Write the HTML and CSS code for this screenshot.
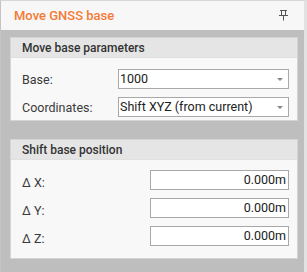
FILE: index.html
```html
<!DOCTYPE html>
<html lang="en">
<head>
  <meta charset="UTF-8" />
  <title>Move GNSS base</title>
  <link rel="stylesheet" href="styles.css">
</head>
<body>
  <div class="janela">
    <div class="janela-topo">
      <span class="titulo">Move GNSS base</span>
      <svg class="pino" width="9" height="11" viewBox="0 0 9 11">
        <path d="M1 0.5h7M2.5 0.5v5M6.5 0.5v5M0 5.5h9M4.5 5.5v5" stroke="#555" stroke-width="1" fill="none" />
      </svg>
    </div>
    <div class="janela-corpo">
      <div class="painel">
        <div class="painel-topo">Move base parameters</div>
        <div class="painel-corpo">
          <div class="linha">
            <label>Base:</label>
            <div class="select">1000<span class="seta"></span></div>
          </div>
          <div class="linha">
            <label>Coordinates:</label>
            <div class="select">Shift XYZ (from current)<span class="seta"></span></div>
          </div>
        </div>
      </div>

      <div class="painel painel-shift">
        <div class="painel-topo">Shift base position</div>
        <div class="painel-corpo">
          <div class="linha">
            <label class="delta">Δ X:</label>
            <div class="numero">0.000m</div>
          </div>
          <div class="linha">
            <label class="delta">Δ Y:</label>
            <div class="numero">0.000m</div>
          </div>
          <div class="linha">
            <label class="delta">Δ Z:</label>
            <div class="numero">0.000m</div>
          </div>
        </div>
      </div>
    </div>
  </div>
</body>
</html>
```

FILE: styles.css
```css
* {
  margin: 0;
  padding: 0;
  box-sizing: border-box;
}
body {
  font-family: Roboto, 'Liberation Sans', sans-serif;
  background: #bebebe;
  color: #333;
  width: 307px;
  height: 272px;
  overflow: hidden;
}
.janela {
  height: 272px;
  border-top: 1px solid #d6d6d6;
  border-left: 1px solid #c4c4c4;
  border-right: 3px solid #e2e2e2;
  display: flex;
  flex-direction: column;
}
.janela-topo {
  height: 29px;
  background: #f7f7f7;
  display: flex;
  align-items: center;
  justify-content: space-between;
  padding: 0 16px 0 13px;
}
.titulo {
  color: #f47a36;
  font-size: 13px;
  font-weight: 500;
}
.pino {
  display: block;
}
.janela-corpo {
  flex: 1;
  background: #bebebe;
  padding: 7px 6px 0 9px;
  display: flex;
  flex-direction: column;
  gap: 18px;
}
.painel {
  border: 1px solid #d4d4d4;
  background: #f8f8f8;
}
.painel-topo {
  height: 20px;
  background: #e5e5e5;
  border-bottom: 1px solid #e0e0e0;
  font-size: 12px;
  font-weight: 500;
  color: #333;
  padding: 1px 0 0 11px;
  line-height: 19px;
}
.painel-corpo {
  padding: 11px 8px 3px 11px;
  display: flex;
  flex-direction: column;
  gap: 8px;
}
.painel-shift .painel-corpo {
  padding-top: 10px;
  padding-bottom: 12px;
}
.linha {
  display: flex;
  align-items: center;
  justify-content: space-between;
  height: 20px;
}
label {
  font-size: 12.5px;
  color: #3a3a3a;
}
.delta {
  padding-top: 4px;
}
.select {
  width: 171px;
  height: 20px;
  border: 1px solid #a8a8a8;
  background: #fff;
  font-size: 12.5px;
  line-height: 18px;
  padding-left: 1px;
  color: #222;
  display: flex;
  justify-content: space-between;
  align-items: center;
}
.seta {
  width: 0;
  height: 0;
  border-left: 3px solid transparent;
  border-right: 3px solid transparent;
  border-top: 3px solid #888;
  margin-right: 5px;
}
.numero {
  width: 139px;
  height: 20px;
  border: 1px solid #a8a8a8;
  background: #fff;
  font-size: 12.5px;
  line-height: 18px;
  text-align: right;
  padding-right: 2px;
  color: #222;
}
```
